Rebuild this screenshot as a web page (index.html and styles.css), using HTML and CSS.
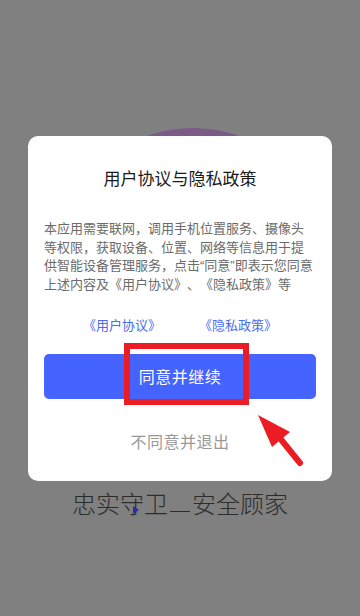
FILE: index.html
```html
<!DOCTYPE html>
<html lang="zh-CN">
<head>
  <meta charset="UTF-8" />
  <meta name="viewport" content="width=device-width, initial-scale=1.0"/>
  <title>用户协议与隐私政策</title>
  <link rel="stylesheet" href="styles.css">
</head>
<body>

  <!-- логотип за диалогом -->
  <div class="logo-circle"></div>

  <div class="dialog">
    <h2 class="dialog-title">用户协议与隐私政策</h2>

    <p class="dialog-text">
      本应用需要联网，调用手机位置服务、摄像头<br>
      等权限，获取设备、位置、网络等信息用于提<br>
      供智能设备管理服务，点击“同意”即表示您同意<br>
      上述内容及《用户协议》、《隐私政策》等
    </p>

    <div class="links">
      <a href="#">《用户协议》</a>
      <a href="#">《隐私政策》</a>
    </div>

    <div class="agree-wrap">
      <button class="agree-btn">同意并继续</button>
      <div class="mark"></div>
    </div>

    <button class="decline-btn">不同意并退出</button>

    <svg class="arrow" width="60" height="65" viewBox="0 0 60 65">
      <line x1="29" y1="32" x2="50" y2="58" stroke="#ec1c24" stroke-width="6" stroke-linecap="round"/>
      <polygon points="8,10 40,27 22,42" fill="#ec1c24"/>
    </svg>
  </div>

  <div class="slogan">
    <span>忠实守卫</span><span class="gap"></span><span>安全顾家</span>
    <i class="play"></i>
  </div>

</body>
</html>
```

FILE: styles.css
```css
* {
  box-sizing: border-box;
}

body {
  margin: 0;
  height: 616px;
  overflow: hidden;
  background-color: #808080;
  font-family: "Noto Sans CJK SC", "Noto Sans", sans-serif;
  text-spacing-trim: space-all;
  position: relative;
}

.logo-circle {
  position: absolute;
  left: 58px;
  top: 128px;
  width: 270px;
  height: 270px;
  border-radius: 50%;
  background-color: #7b5a88;
}

.dialog {
  position: relative;
  margin: 136px 28px 0;
  background: #fff;
  border-radius: 10px;
  padding: 30px 16px 29px;
  display: flex;
  flex-direction: column;
  align-items: stretch;
}

.dialog-title {
  margin: 0;
  font-size: 17px;
  line-height: 24px;
  font-weight: normal;
  color: #1a1a1a;
  text-align: center;
}

/* кавычки берём из латинского шрифта — они узкие */
.dialog-text {
  margin: 30px 0 0;
  font-family: "Liberation Sans", "Noto Sans CJK SC", sans-serif;
  font-size: 13px;
  line-height: 18.7px;
  color: #6b6b6b;
  white-space: nowrap;
}

.links {
  margin-top: 20px;
  display: flex;
  justify-content: center;
  gap: 38px;
}

.links a {
  font-size: 13px;
  line-height: 20px;
  color: #4a6cf4;
  text-decoration: none;
}

.agree-wrap {
  position: relative;
  margin-top: 19px;
}

.agree-btn {
  width: 100%;
  height: 45px;
  border: none;
  border-radius: 5px;
  background-color: #4563ff;
  color: #fff;
  font-family: inherit;
  font-size: 16px;
  letter-spacing: 0.5px;
}

/* красная рамка-пометка */
.mark {
  position: absolute;
  left: 80px;
  top: -11px;
  width: 125px;
  height: 62px;
  border: 6px solid #ec1c24;
}

.decline-btn {
  margin-top: 31px;
  border: none;
  background: none;
  padding: 0;
  font-family: inherit;
  font-size: 16px;
  line-height: 22px;
  color: #999;
  letter-spacing: 0.5px;
}

.arrow {
  position: absolute;
  left: 222px;
  top: 269px;
}

.slogan {
  position: relative;
  margin-top: 7px;
  display: flex;
  justify-content: center;
  align-items: flex-start;
  font-size: 24px;
  line-height: 30px;
  font-weight: 300;
  color: #2c2c2c;
}

.slogan .gap {
  width: 20px;
  margin: 0 2px;
  border-bottom: 1.5px solid #2c2c2c;
  height: 24px;
}

.play {
  position: absolute;
  left: 133px;
  top: 18px;
  width: 0;
  height: 0;
  border-top: 4px solid transparent;
  border-bottom: 4px solid transparent;
  border-left: 6px solid #2b2ba8;
}
```
